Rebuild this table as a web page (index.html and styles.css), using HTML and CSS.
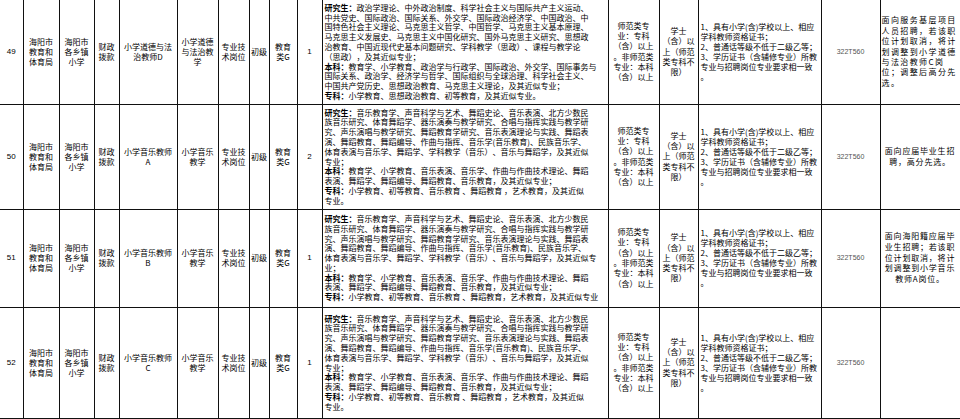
FILE: index.html
```html
<!DOCTYPE html>
<html lang="zh-CN">
<head>
<meta charset="utf-8">
<title>岗位表</title>
<link rel="stylesheet" href="styles.css">
</head>
<body>
<table class="grid">
<colgroup>
<col class="w23"><col class="w36"><col class="w35"><col class="w25"><col class="w58"><col class="w41"><col class="w31"><col class="w20"><col class="w28"><col class="w25"><col class="w286"><col class="w51"><col class="w39"><col class="w123"><col class="w59"><col class="w80">
</colgroup>
<tr class="r49">
<td class="num">49</td>
<td>海阳市<br>教育和<br>体育局</td>
<td>海阳市<br>各乡镇<br>小学</td>
<td>财政<br>拨款</td>
<td>小学道德与法<br>治教师D</td>
<td>小学道德<br>与法治教<br>学</td>
<td>专业技<br>术岗位</td>
<td>初级</td>
<td>教育<br>类G</td>
<td class="num">1</td>
<td class="req"><b>研究生：</b>政治学理论、中外政治制度、科学社会主义与国际共产主义运动、<br>中共党史、国际政治、国际关系、外交学、国际政治经济学、中国政治、中<br>国特色社会主义理论、马克思主义哲学、中国哲学、马克思主义基本原理、<br>马克思主义发展史、马克思主义中国化研究、国外马克思主义研究、思想政<br>治教育、中国近现代史基本问题研究、学科教学（思政）、课程与教学论<br>（思政），及其近似专业；<br><b>本科：</b>教育学、小学教育、政治学与行政学、国际政治、外交学、国际事务与<br>国际关系、政治学、经济学与哲学、国际组织与全球治理、科学社会主义、<br>中国共产党历史、思想政治教育、马克思主义理论，及其近似专业；<br><b>专科：</b>小学教育、思想政治教育、初等教育，及其近似专业。</td>
<td class="edu">师范类专<br>业：专科<br>（含）以上<br>。非师范类<br>专业：本科<br>（含）以上</td>
<td class="deg">学士<br>（含）以<br>上（师范<br>类专科不<br>限）</td>
<td class="cond">1、具有小学(含)学校以上、相应<br>学科教师资格证书；<br>2、普通话等级不低于二级乙等；<br>3、学历证书（含辅修专业）所教<br>专业与招聘岗位专业要求相一致<br>。</td>
<td class="tel">322T560</td>
<td class="note note-left">面向服务基层项目<br>人员招聘，若该职<br>位计划取消，将计<br>划调整到小学道德<br>与法治教师C岗<br>位；调整后高分先<br>选。</td>
</tr>
<tr class="r50">
<td class="num">50</td>
<td>海阳市<br>教育和<br>体育局</td>
<td>海阳市<br>各乡镇<br>小学</td>
<td>财政<br>拨款</td>
<td>小学音乐教师<br>A</td>
<td>小学音乐<br>教学</td>
<td>专业技<br>术岗位</td>
<td>初级</td>
<td>教育<br>类G</td>
<td class="num">2</td>
<td class="req"><b>研究生：</b>音乐教育学、声音科学与艺术、舞蹈史论、音乐表演、北方少数民<br>族音乐研究、体育舞蹈学、器乐演奏与教学研究、合唱与指挥实践与教学研<br>究、声乐演唱与教学研究、舞蹈教育学研究、音乐表演理论与实践、舞蹈表<br>演、舞蹈教育、舞蹈编导、作曲与指挥、音乐学(音乐教育)、民族音乐学、<br>体育表演与音乐学、舞蹈学、学科教学（音乐）、音乐与舞蹈学，及其近似<br>专业；<br><b>本科：</b>教育学、小学教育、音乐表演、音乐学、作曲与作曲技术理论、舞蹈<br>表演、舞蹈学、舞蹈编导、舞蹈教育、音乐教育，及其近似专业；<br><b>专科：</b>小学教育、初等教育、音乐教育 、舞蹈教育 ，艺术教育，及其近似<br>专业。</td>
<td class="edu">师范类专<br>业：专科<br>（含）以上<br>。非师范类<br>专业：本科<br>（含）以上</td>
<td class="deg">学士<br>（含）以<br>上（师范<br>类专科不<br>限）</td>
<td class="cond">1、具有小学(含)学校以上、相应<br>学科教师资格证书；<br>2、普通话等级不低于二级乙等；<br>3、学历证书（含辅修专业）所教<br>专业与招聘岗位专业要求相一致<br>。</td>
<td class="tel">322T560</td>
<td class="note">面向应届毕业生招<br>聘，高分先选。</td>
</tr>
<tr class="r51">
<td class="num">51</td>
<td>海阳市<br>教育和<br>体育局</td>
<td>海阳市<br>各乡镇<br>小学</td>
<td>财政<br>拨款</td>
<td>小学音乐教师<br>B</td>
<td>小学音乐<br>教学</td>
<td>专业技<br>术岗位</td>
<td>初级</td>
<td>教育<br>类G</td>
<td class="num">1</td>
<td class="req"><b>研究生：</b>音乐教育学、声音科学与艺术、舞蹈史论、音乐表演、北方少数民<br>族音乐研究、体育舞蹈学、器乐演奏与教学研究、合唱与指挥实践与教学研<br>究、声乐演唱与教学研究、舞蹈教育学研究、音乐表演理论与实践、舞蹈表<br>演、舞蹈教育、舞蹈编导、作曲与指挥、音乐学(音乐教育)、民族音乐学、<br>体育表演与音乐学、舞蹈学、学科教学（音乐）、音乐与舞蹈学，及其近似专<br>业；<br><b>本科：</b>教育学、小学教育、音乐表演、音乐学、作曲与作曲技术理论、舞蹈<br>表演、舞蹈学、舞蹈编导、舞蹈教育、音乐教育，及其近似专业；<br><b>专科：</b>小学教育、初等教育、音乐教育 、舞蹈教育，艺术教育，及其近似专业</td>
<td class="edu">师范类专<br>业：专科<br>（含）以上<br>。非师范类<br>专业：本科<br>（含）以上</td>
<td class="deg">学士<br>（含）以<br>上（师范<br>类专科不<br>限）</td>
<td class="cond">1、具有小学(含)学校以上、相应<br>学科教师资格证书；<br>2、普通话等级不低于二级乙等；<br>3、学历证书（含辅修专业）所教<br>专业与招聘岗位专业要求相一致<br>。</td>
<td class="tel">322T560</td>
<td class="note">面向海阳籍应届毕<br>业生招聘；若该职<br>位计划取消，将计<br>划调整到小学音乐<br>教师A岗位。</td>
</tr>
<tr class="r52">
<td class="num">52</td>
<td>海阳市<br>教育和<br>体育局</td>
<td>海阳市<br>各乡镇<br>小学</td>
<td>财政<br>拨款</td>
<td>小学音乐教师<br>C</td>
<td>小学音乐<br>教学</td>
<td>专业技<br>术岗位</td>
<td>初级</td>
<td>教育<br>类G</td>
<td class="num">1</td>
<td class="req"><b>研究生：</b>音乐教育学、声音科学与艺术、舞蹈史论、音乐表演、北方少数民<br>族音乐研究、体育舞蹈学、器乐演奏与教学研究、合唱与指挥实践与教学研<br>究、声乐演唱与教学研究、舞蹈教育学研究、音乐表演理论与实践、舞蹈表<br>演、舞蹈教育、舞蹈编导、作曲与指挥、音乐学(音乐教育)、民族音乐学、<br>体育表演与音乐学、舞蹈学、学科教学（音乐）、音乐与舞蹈学，及其近似<br>专业；<br><b>本科：</b>教育学、小学教育、音乐表演、音乐学、作曲与作曲技术理论、舞蹈<br>表演、舞蹈学、舞蹈编导、舞蹈教育、音乐教育，及其近似专业；<br><b>专科：</b>小学教育、初等教育、音乐教育 、舞蹈教育 ，艺术教育，及其近似<br>专业。</td>
<td class="edu">师范类专<br>业：专科<br>（含）以上<br>。非师范类<br>专业：本科<br>（含）以上</td>
<td class="deg">学士<br>（含）以<br>上（师范<br>类专科不<br>限）</td>
<td class="cond">1、具有小学(含)学校以上、相应<br>学科教师资格证书；<br>2、普通话等级不低于二级乙等；<br>3、学历证书（含辅修专业）所教<br>专业与招聘岗位专业要求相一致<br>。</td>
<td class="tel">322T560</td>
<td class="note"></td>
</tr>
</table>
</body>
</html>
```
FILE: styles.css
```css
html, body {
  margin: 0;
  padding: 0;
  background: #fff;
}
body {
  font-family: "Noto Sans CJK SC", sans-serif;
  font-size: 8px;
  color: #000;
  text-spacing-trim: space-all;
  overflow: hidden;
}
.grid {
  border-collapse: collapse;
  table-layout: fixed;
  width: 960px;
}
.w23 { width: 23px; }
.w36 { width: 36px; }
.w35 { width: 35px; }
.w25 { width: 25px; }
.w58 { width: 58px; }
.w41 { width: 41px; }
.w31 { width: 31px; }
.w20 { width: 20px; }
.w28 { width: 28px; }
.w286 { width: 286px; }
.w51 { width: 51px; }
.w39 { width: 39px; }
.w123 { width: 123px; }
.w59 { width: 59px; }
.w80 { width: 80px; }

.grid td {
  border: 1px solid #111;
  padding: 0 1px;
  text-align: center;
  vertical-align: middle;
  line-height: 10px;
  white-space: nowrap;
  overflow: hidden;
}
.grid td:first-child { border-left: none; }
.grid td:last-child { border-left-color: #9a9a9a; border-right-color: #9a9a9a; }
.r49 td { border-top: none; }
.r49 { height: 104px; }
.r50 { height: 105px; }
.r51 { height: 98px; }
.r52 { height: 111px; }

.num {
  font-family: "Liberation Sans", "Noto Sans CJK SC", sans-serif;
  font-size: 8px;
}
.req {
  text-align: left !important;
  line-height: 9.8px !important;
  padding: 0 2px !important;
}
.req b { font-weight: 700; }
.edu, .deg { line-height: 10.3px !important; }
.cond {
  text-align: left !important;
  padding: 0 2px !important;
}
.tel {
  font-family: "Liberation Sans", sans-serif;
  font-size: 7px;
  color: #555;
}
.note {
  line-height: 10.8px !important;
  letter-spacing: 0.8px;
}
.note-left {
  text-align: left !important;
  letter-spacing: 1.4px;
  line-height: 10.4px !important;
}
```
